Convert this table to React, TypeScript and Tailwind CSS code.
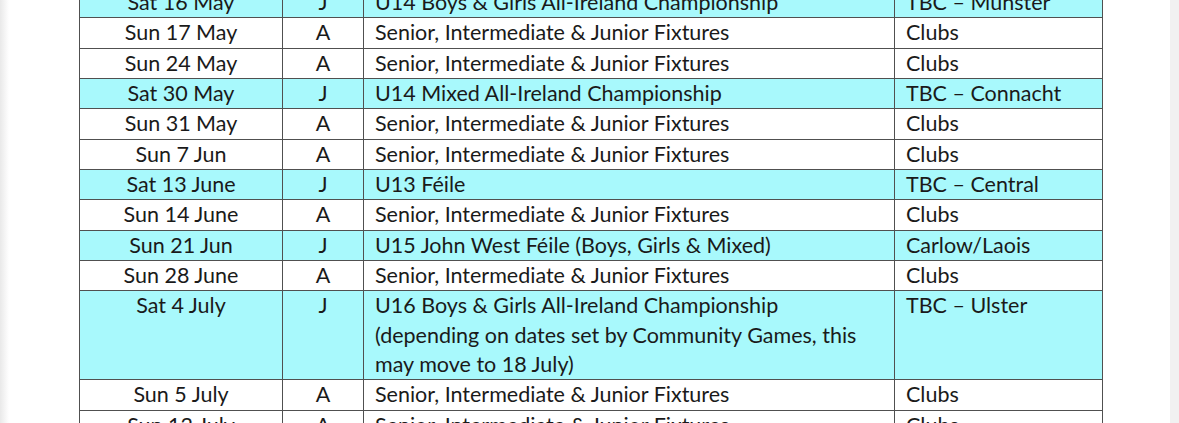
import React from "react";

type Row = {
  date: string;
  code: string;
  event: string[];
  venue: string;
  hl?: boolean;
};

const FIX = "Senior, Intermediate & Junior Fixtures";

const rows: Row[] = [
  { date: "Sat 16 May", code: "J", event: ["U14 Boys & Girls All-Ireland Championship"], venue: "TBC – Munster", hl: true },
  { date: "Sun 17 May", code: "A", event: [FIX], venue: "Clubs" },
  { date: "Sun 24 May", code: "A", event: [FIX], venue: "Clubs" },
  { date: "Sat 30 May", code: "J", event: ["U14 Mixed All-Ireland Championship"], venue: "TBC – Connacht", hl: true },
  { date: "Sun 31 May", code: "A", event: [FIX], venue: "Clubs" },
  { date: "Sun 7 Jun", code: "A", event: [FIX], venue: "Clubs" },
  { date: "Sat 13 June", code: "J", event: ["U13 Féile"], venue: "TBC – Central", hl: true },
  { date: "Sun 14 June", code: "A", event: [FIX], venue: "Clubs" },
  { date: "Sun 21 Jun", code: "J", event: ["U15 John West Féile (Boys, Girls & Mixed)"], venue: "Carlow/Laois", hl: true },
  { date: "Sun 28 June", code: "A", event: [FIX], venue: "Clubs" },
  {
    date: "Sat 4 July",
    code: "J",
    event: [
      "U16 Boys & Girls All-Ireland Championship",
      "(depending on dates set by Community Games, this",
      "may move to 18 July)",
    ],
    venue: "TBC – Ulster",
    hl: true,
  },
  { date: "Sun 5 July", code: "A", event: [FIX], venue: "Clubs" },
  { date: "Sun 12 July", code: "A", event: [FIX], venue: "Clubs" },
];

export default function App() {
  return (
    <div
      className="flex h-[423px] w-full overflow-hidden bg-white text-[#1a1a1a]"
      style={{ fontFamily: "Lato, 'Open Sans', sans-serif" }}
    >
      {/* page shadow on the left */}
      <div className="w-[9px] shrink-0 bg-gradient-to-r from-[#e9e9e9] to-white" />

      <div className="flex-1 pl-[70px]">
        <table className="-mt-[13px] w-[1023px] table-fixed border-collapse text-[21.5px] leading-[29.35px]">
          <colgroup>
            <col className="w-[203px]" />
            <col className="w-[81px]" />
            <col className="w-[531px]" />
            <col className="w-[208px]" />
          </colgroup>
          <tbody>
            {rows.map((r) => (
              <tr key={r.date} className={r.hl ? "bg-[#a8f9fc]" : "bg-white"}>
                <td className="border border-[#505050] p-0 text-center align-top">{r.date}</td>
                <td className="border border-[#505050] p-0 text-center align-top">{r.code}</td>
                <td className="border border-[#505050] p-0 pl-[11px] align-top">
                  {r.event.map((l) => (
                    <div key={l}>{l}</div>
                  ))}
                </td>
                <td className="border border-[#505050] p-0 pl-[11px] align-top">{r.venue}</td>
              </tr>
            ))}
          </tbody>
        </table>
      </div>

      {/* scroll gutter on the right */}
      <div className="w-[9px] shrink-0 bg-[#f1f1f1]" />
    </div>
  );
}
